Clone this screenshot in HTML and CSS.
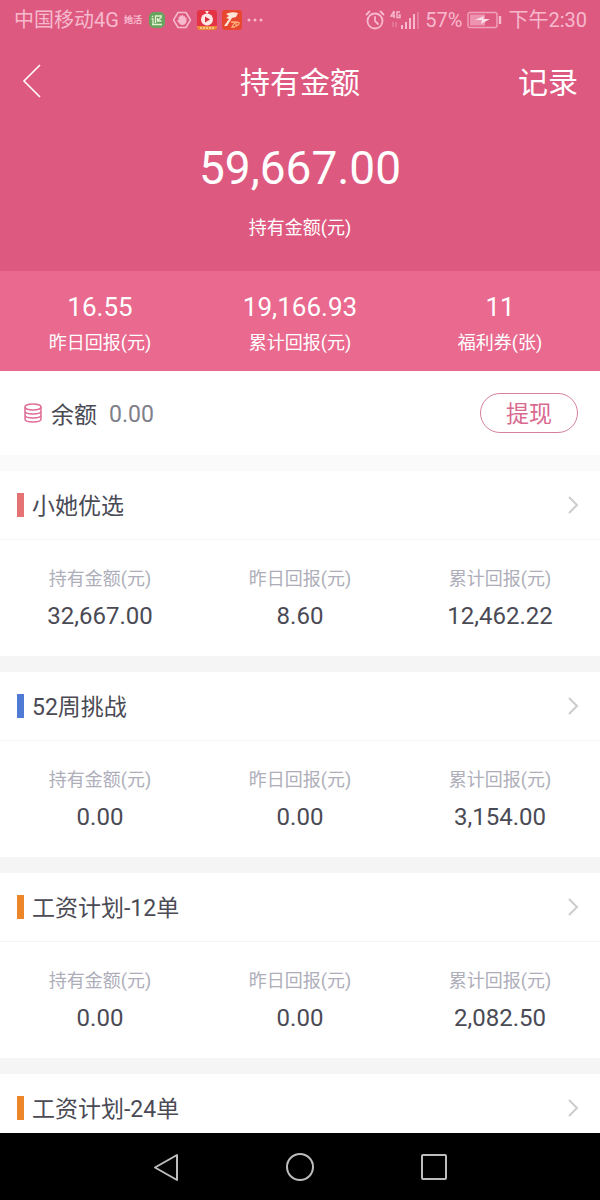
FILE: index.html
```html
<!DOCTYPE html>
<html lang="zh-CN">
<head>
<meta charset="utf-8">
<meta name="viewport" content="width=device-width, initial-scale=1">
<title>持有金额</title>
<link rel="stylesheet" href="styles.css">
</head>
<body>
<div class="screen">
  <header class="hero">
    <div class="status">
      <div class="status-left">
        <span>中国移动4G</span>
        <span class="tiny">她活</span>
        <svg class="app" viewBox="0 0 20 20"><rect x="2" y="2" width="16" height="16" rx="5" fill="#68a45f"/><g fill="none" stroke="#e3f0cf" stroke-width="1.300"><path d="M5 6l1 1M4.500 9h1.500v5M15 6H8.500v7M14.500 7l-4 4M10.500 8v3h4M5 14.500h10"/></g></svg>
        <svg class="app" viewBox="0 0 20 20"><path d="M6 2.500h8l4.500 7.500-4.500 7.500H6L1.500 10z" fill="none" stroke="#f6b9cd" stroke-width="1.500" stroke-linejoin="round"/><path d="M6.500 10V7q.7-1 1.500 0V6q.8-1.500 1.600 0V5.500q.9-1 1.700 0V6.500q.9-1 1.700 0V8q1-1 1.500 0v3.500q-1 3.500-4 3.500-2 0-3-1.500L5 11q0-1 1.500-1z" fill="#f6b9cd"/></svg>
        <svg class="app" viewBox="0 0 20 20"><rect width="20" height="20" rx="3" fill="#e53346"/><path d="M0 16h20v1q0 3-3 3H3q-3 0-3-3z" fill="#ee8a3c"/><circle cx="10" cy="9.500" r="6" fill="#ffe7e5"/><path d="M8 1l2 3 2-3z" fill="#ffe7e5"/><path d="M8 6.500v6l5-3z" fill="#d93040"/><path d="M3 18h14" stroke="#ffd8a0" stroke-width="1.500" stroke-dasharray="2 1"/></svg>
        <svg class="app" viewBox="0 0 20 20"><rect width="20" height="20" rx="3" fill="#e8472f"/><path d="M4 4q5-3 12-1l-2 4-4 1-5 8H2l5-7-3-1 3-2z" fill="#ffe4d8"/><path d="M9 12h4l-3 5h3M14 17v-5q4 0 3 2t-3 1" fill="none" stroke="#ffb07c" stroke-width="1.300"/></svg>
        <svg class="dots" viewBox="0 0 16 4" fill="#f6b9cd"><circle cx="2" cy="2" r="1.500"/><circle cx="8" cy="2" r="1.500"/><circle cx="14" cy="2" r="1.500"/></svg>
      </div>
      <div class="status-right">
        <svg class="alarm" viewBox="0 0 20 20" fill="none" stroke="#f6b9cd" stroke-width="1.800" stroke-linecap="round"><circle cx="10" cy="11" r="7.500"/><path d="M10 7v4l3 3M1.500 4.500l3-3M18.500 4.500l-3-3"/></svg>
        <svg class="signal" viewBox="0 0 30 20"><g fill="none" stroke="#f6b9cd" stroke-width="1.400"><path d="M4 1L1 6h4M4 1v7M10 2H7v5.500h3V5H8.500"/></g><path d="M3 12v5M6 12v5" stroke="#e991ae"/><path d="M12 15v4M16 12v7M20 8v11M24 4v15" stroke="#f6b9cd" stroke-width="2"/><path d="M28 2v17" stroke="#e57b9e" stroke-width="2"/></svg>
        <span>57%</span>
        <svg class="battery" viewBox="0 0 36 18"><rect x="1" y="1.500" width="29" height="15" rx="2" fill="none" stroke="#f0a3bc" stroke-width="1.400"/><rect x="3" y="3.500" width="15" height="11" fill="#ed93b0"/><path d="M8 9l9-4-1 3h7l-9 5 1-4z" fill="#fde0e9"/><path d="M33 5v8" stroke="#f6b9cd" stroke-width="2.400"/></svg>
        <span>下午2:30</span>
      </div>
    </div>
    <nav class="titlebar">
      <button class="back" aria-label="返回"><svg viewBox="0 0 18 34"><path d="M17 1L1 17l16 16" fill="none" stroke="#fff" stroke-width="1.600"/></svg></button>
      <h1>持有金额</h1>
      <a class="record" href="#">记录</a>
    </nav>
    <div class="total">
      <strong>59,667.00</strong>
      <span>持有金额(元)</span>
    </div>
    <div class="stats">
      <div class="stat"><b>16.55</b><span>昨日回报(元)</span></div>
      <div class="stat"><b>19,166.93</b><span>累计回报(元)</span></div>
      <div class="stat"><b>11</b><span>福利券(张)</span></div>
    </div>
  </header>

  <main class="content">
    <section class="balance">
      <svg class="coins" viewBox="0 0 18 20" fill="none" stroke="#df6f98" stroke-width="1.500"><ellipse cx="9" cy="4" rx="8" ry="3"/><path d="M1 4v12c0 4 16 4 16 0V4M1 8c0 4 16 4 16 0M1 12c0 4 16 4 16 0"/></svg>
      <span class="balance-name">余额</span>
      <span class="balance-value">0.00</span>
      <button class="withdraw">提现</button>
    </section>

    <section class="plan">
      <a class="plan-head" href="#"><i class="mark red"></i><h2>小她优选</h2><svg class="chevron" viewBox="0 0 12 20"><path d="M2 2l8 8-8 8"/></svg></a>
      <dl class="figures">
        <div><dt>持有金额(元)</dt><dd>32,667.00</dd></div>
        <div><dt>昨日回报(元)</dt><dd>8.60</dd></div>
        <div><dt>累计回报(元)</dt><dd>12,462.22</dd></div>
      </dl>
    </section>
    <section class="plan">
      <a class="plan-head" href="#"><i class="mark blue"></i><h2>52周挑战</h2><svg class="chevron" viewBox="0 0 12 20"><path d="M2 2l8 8-8 8"/></svg></a>
      <dl class="figures">
        <div><dt>持有金额(元)</dt><dd>0.00</dd></div>
        <div><dt>昨日回报(元)</dt><dd>0.00</dd></div>
        <div><dt>累计回报(元)</dt><dd>3,154.00</dd></div>
      </dl>
    </section>
    <section class="plan">
      <a class="plan-head" href="#"><i class="mark orange"></i><h2>工资计划-12单</h2><svg class="chevron" viewBox="0 0 12 20"><path d="M2 2l8 8-8 8"/></svg></a>
      <dl class="figures">
        <div><dt>持有金额(元)</dt><dd>0.00</dd></div>
        <div><dt>昨日回报(元)</dt><dd>0.00</dd></div>
        <div><dt>累计回报(元)</dt><dd>2,082.50</dd></div>
      </dl>
    </section>
    <section class="plan">
      <a class="plan-head" href="#"><i class="mark orange"></i><h2>工资计划-24单</h2><svg class="chevron" viewBox="0 0 12 20"><path d="M2 2l8 8-8 8"/></svg></a>
    </section>
  </main>

  <nav class="system">
    <button aria-label="后退"><svg viewBox="0 0 30 30"><path d="M26 3v25L4 15.500z"/></svg></button>
    <button aria-label="主屏幕"><svg viewBox="0 0 30 30"><circle cx="15" cy="15" r="13"/></svg></button>
    <button aria-label="最近任务"><svg viewBox="0 0 30 30"><rect x="3" y="3" width="24" height="24" rx="1"/></svg></button>
  </nav>
</div>
</body>
</html>
```
FILE: styles.css
```css
* { box-sizing: border-box; }
body {
  margin: 0;
  font-family: Roboto, "Noto Sans CJK SC", sans-serif;
  color: #4a4a55;
  background: #fff;
}
h1, h2, dl, dd { margin: 0; font-weight: 400; }
a { color: inherit; text-decoration: none; }
button { padding: 0; border: 0; background: none; font: inherit; }
svg { display: block; flex: none; }

.screen { display: flex; flex-direction: column; height: 100vh; }
.hero { flex: none; background: #de5980; color: #fff; }

.status {
  display: flex;
  justify-content: space-between;
  height: 40px;
  padding: 0 13px 0 14px;
  color: #f6b9cd;
  font-size: 20px;
  line-height: 40px;
}
.status-left, .status-right { display: flex; align-items: center; white-space: nowrap; }
.status-left { gap: 5px; }
.status-right { gap: 5px; }
.tiny { font-size: 9px; font-weight: 700; }
.app { width: 20px; height: 20px; }
.dots { width: 16px; height: 4px; }
.alarm { width: 20px; height: 20px; }
.signal { width: 30px; height: 20px; }
.battery { width: 36px; height: 18px; }

.titlebar {
  display: grid;
  grid-template-columns: 1fr auto 1fr;
  align-items: center;
  height: 81px;
  padding: 0 22px;
  font-size: 30px;
  line-height: 40px;
}
.titlebar h1 { padding-top: 4px; font-size: 30px; }
.back svg { width: 20px; height: 34px; }
.record { justify-self: end; padding-top: 4px; }

.total {
  display: flex;
  flex-direction: column;
  align-items: center;
  gap: 20px;
  height: 150px;
  padding-top: 17px;
}
.total strong { font-size: 46px; line-height: 60px; font-weight: 400; }
.total span { font-size: 18px; line-height: 20px; }

.stats {
  display: grid;
  grid-template-columns: repeat(3, 1fr);
  height: 100px;
  padding-top: 20px;
  background: #e9698f;
  text-align: center;
}
.stat { display: flex; flex-direction: column; gap: 10px; }
.stat b { font-size: 26px; line-height: 32px; font-weight: 400; }
.stat span { font-size: 18px; line-height: 20px; }

.content { flex: 1; min-height: 0; overflow: hidden; background: #f5f5f5; }

.balance {
  display: flex;
  align-items: center;
  height: 100px;
  padding: 0 22px 0 24px;
  background: #fff;
  border-bottom: 16px solid #fafafa;
  font-size: 23px;
}
.coins { width: 18px; height: 20px; }
.balance-name { margin-left: 9px; }
.balance-value { margin-left: 12px; padding-top: 2px; color: #80808a; }
.withdraw {
  width: 98px;
  height: 40px;
  margin-left: auto;
  padding-top: 4px;
  border: 1px solid #d5809e;
  border-radius: 20px;
  color: #d9698f;
  line-height: 34px;
}

.plan { margin-bottom: 16px; background: #fff; }
.plan-head {
  display: flex;
  align-items: center;
  height: 69px;
  padding: 0 21px 0 17px;
  border-bottom: 1px solid #f4f4f4;
}
.plan-head h2 { margin-left: 8px; padding-top: 4px; font-size: 23px; line-height: 32px; }
.mark { width: 7px; height: 24px; }
.red { background: #e57373; }
.blue { background: #4f7bd5; }
.orange { background: #ed8628; }
.chevron { width: 12px; height: 20px; margin-left: auto; fill: none; stroke: #ccc; stroke-width: 2; }

.figures {
  display: grid;
  grid-template-columns: repeat(3, 1fr);
  height: 116px;
  padding-top: 29px;
  text-align: center;
}
.figures dt { color: #aeaeba; font-size: 18px; line-height: 20px; }
.figures dd { margin-top: 11px; font-size: 24px; line-height: 32px; }

.system {
  display: flex;
  flex: none;
  align-items: center;
  justify-content: center;
  gap: 104px;
  height: 67px;
  background: #000;
}
.system svg { width: 30px; height: 30px; fill: none; stroke: #bdbdbd; stroke-width: 2; stroke-linejoin: round; }
```
